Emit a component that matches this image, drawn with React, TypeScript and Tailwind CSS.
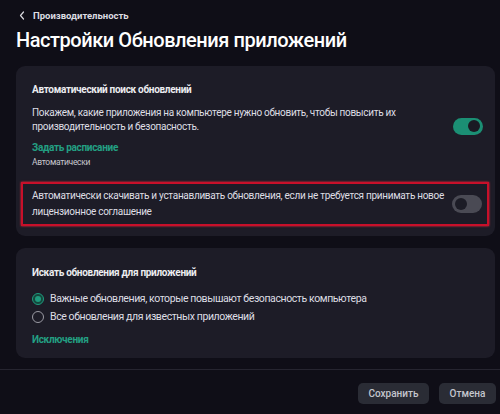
import React from "react";

function Toggle({ on }: { on: boolean }) {
  return on ? (
    <div className="w-[30px] h-[17px] rounded-full bg-[#1b8f74] flex items-center justify-end pr-[3px] shrink-0">
      <div className="w-[12px] h-[12px] rounded-full bg-[#1a1a23]" />
    </div>
  ) : (
    <div className="w-[30px] h-[18px] rounded-full bg-[#4a4a54] flex items-center justify-start pl-[3px] shrink-0">
      <div className="w-[12px] h-[12px] rounded-full bg-[#1c1c26]" />
    </div>
  );
}

function Radio({ checked }: { checked: boolean }) {
  return checked ? (
    <div className="w-[12px] h-[12px] rounded-full border-[1.5px] border-[#1f9b7e] bg-[#14473c] flex items-center justify-center shrink-0">
      <div className="w-[6px] h-[6px] rounded-full bg-[#1f9b7e]" />
    </div>
  ) : (
    <div className="w-[12px] h-[12px] rounded-full border-[1.5px] border-[#9a9aa3] shrink-0" />
  );
}

export default function App() {
  return (
    <div
      className="w-[500px] h-[414px] bg-[#0f0e17] text-[#e6e6ea] overflow-hidden flex flex-col"
      style={{ fontFamily: "Roboto, 'Noto Sans', sans-serif" }}
    >
      <div className="pl-4 pr-[5px] flex flex-col flex-1">
        <div className="flex items-center gap-[8px] pt-[9px] pl-[3px] h-[22px]">
          <svg width="6" height="9" viewBox="0 0 6 9" fill="none">
            <path d="M4.5 1L1.5 4.5L4.5 8" stroke="#d8d8de" strokeWidth="1.2" strokeLinecap="round" strokeLinejoin="round" />
          </svg>
          <span className="text-[9.5px] font-bold text-[#dcdce2] leading-none">Производительность</span>
        </div>
        <h1 className="text-[20px] font-medium text-white leading-none mt-[8px] tracking-[-0.45px]">
          Настройки Обновления приложений
        </h1>

        <div className="mt-[16px] rounded-[9px] bg-[#1d1c27] pt-[17px] pb-[10px] px-[5px] tracking-[-0.3px]">
          <div className="flex items-center pl-[11px] pr-[7px]">
            <div className="flex-1">
              <div className="text-[10px] font-bold text-[#ececf0] leading-[14px]">
                Автоматический поиск обновлений
              </div>
              <div className="mt-[9px] text-[10px] text-[#dedee4] leading-[14px] w-[380px]">
                Покажем, какие приложения на компьютере нужно обновить, чтобы повысить их производительность и безопасность.
              </div>
              <div className="mt-[7px] text-[10px] font-bold text-[#23a083] leading-[14px]">
                Задать расписание
              </div>
              <div className="mt-[1px] text-[8.5px] text-[#c8c8cf] leading-[13px]">Автоматически</div>
            </div>
            <Toggle on={true} />
          </div>

          <div className="mt-[13px] border-2 border-[#c8102a] shadow-[0_0_2px_#ff2a40] flex items-center pl-[9px] pr-[5px] py-[4px] h-[44px] mr-[1px]">
            <div className="flex-1 text-[10px] text-[#dedee4] leading-[16px] pr-[8px]">
              Автоматически скачивать и устанавливать обновления, если не требуется принимать новое лицензионное соглашение
            </div>
            <Toggle on={false} />
          </div>
        </div>

        <div className="mt-[12px] rounded-[9px] bg-[#1d1c27] pt-[18px] px-[16px] h-[110px] tracking-[-0.3px]">
          <div className="text-[10px] font-bold text-[#ececf0] leading-[14px]">
            Искать обновления для приложений
          </div>
          <div className="mt-[10px] flex items-center gap-[6px] h-[18px]">
            <Radio checked={true} />
            <span className="text-[10.5px] text-[#dedee4] tracking-[-0.4px]">Важные обновления, которые повышают безопасность компьютера</span>
          </div>
          <div className="flex items-center gap-[6px] h-[18px]">
            <Radio checked={false} />
            <span className="text-[10.5px] text-[#dedee4] tracking-[-0.4px]">Все обновления для известных приложений</span>
          </div>
          <div className="mt-[7px] text-[10px] font-bold text-[#23a083] leading-[14px]">Исключения</div>
        </div>
      </div>

      <div className="mt-auto">
        <div className="h-[1px] bg-[#262530]" />
        <div className="flex justify-end gap-[10px] pr-[4px] pt-[13px] pb-[10px]">
          <button className="w-[71px] h-[21px] rounded-[5px] bg-[#2a2c35] text-[10px] font-medium text-[#c4c6cd]">
            Сохранить
          </button>
          <button className="w-[57px] h-[21px] rounded-[5px] bg-[#2a2c35] text-[10px] font-medium text-[#c4c6cd]">
            Отмена
          </button>
        </div>
      </div>
    </div>
  );
}
